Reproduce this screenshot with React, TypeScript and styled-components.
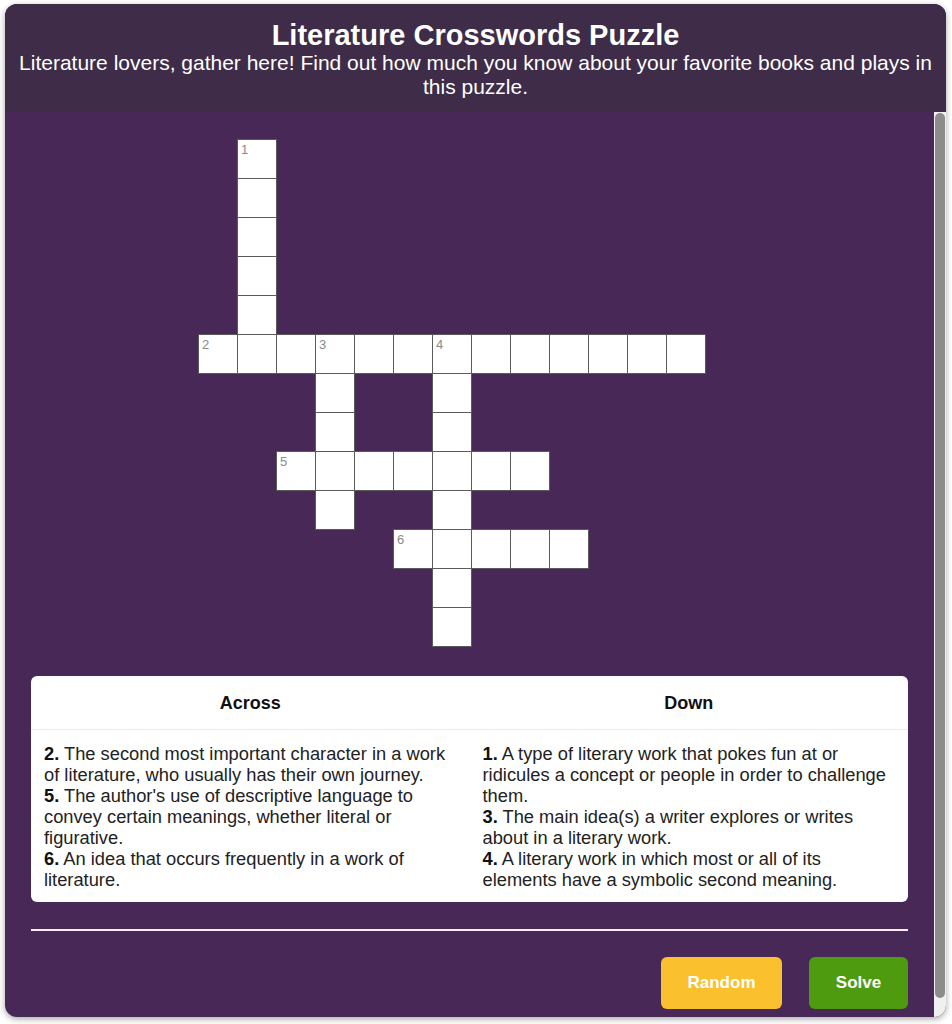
import React from 'react'
import styled, { createGlobalStyle } from 'styled-components'

const GlobalStyle = createGlobalStyle`
  html, body {
    margin: 0;
    padding: 0;
    background: #ffffff;
  }
  * {
    box-sizing: border-box;
  }
`

const CELL = 39

type Entry = { row: number; col: number; num?: number }

// squares that hold a letter, row/col from the top-left of the board
const cells: Entry[] = [
  { row: 0, col: 1, num: 1 },
  { row: 1, col: 1 },
  { row: 2, col: 1 },
  { row: 3, col: 1 },
  { row: 4, col: 1 },
  ...Array.from({ length: 13 }, (_, i) => ({
    row: 5,
    col: i,
    num: i === 0 ? 2 : i === 3 ? 3 : i === 6 ? 4 : undefined,
  })),
  { row: 6, col: 3 },
  { row: 7, col: 3 },
  { row: 9, col: 3 },
  { row: 6, col: 6 },
  { row: 7, col: 6 },
  ...Array.from({ length: 7 }, (_, i) => ({ row: 8, col: 2 + i, num: i === 0 ? 5 : undefined })),
  { row: 9, col: 6 },
  ...Array.from({ length: 5 }, (_, i) => ({ row: 10, col: 5 + i, num: i === 0 ? 6 : undefined })),
  { row: 11, col: 6 },
  { row: 12, col: 6 },
]

const across = [
  { num: 2, text: 'The second most important character in a work of literature, who usually has their own journey.' },
  { num: 5, text: "The author's use of descriptive language to convey certain meanings, whether literal or figurative." },
  { num: 6, text: 'An idea that occurs frequently in a work of literature.' },
]

const down = [
  { num: 1, text: 'A type of literary work that pokes fun at or ridicules a concept or people in order to challenge them.' },
  { num: 3, text: 'The main idea(s) a writer explores or writes about in a literary work.' },
  { num: 4, text: 'A literary work in which most or all of its elements have a symbolic second meaning.' },
]

/* Page + card */
const Page = styled.div`
  padding: 4px 6px 7px 5px;
  font-family: 'Liberation Sans', Arial, sans-serif;
`
const Card = styled.div`
  height: 1013px;
  display: flex;
  flex-direction: column;
  border-radius: 12px;
  overflow: hidden;
  background: #472856;
  box-shadow: 0 2px 6px rgba(0, 0, 0, 0.35);
`
const Header = styled.header`
  flex: 0 0 108px;
  background: #3e2c48;
  color: #ffffff;
  text-align: center;
  padding: 15px 10px 0;
`
const Title = styled.h1`
  margin: 0;
  font-size: 29px;
  line-height: 32px;
  font-weight: 700;
`
const Subtitle = styled.p`
  margin: 0;
  font-size: 21px;
  line-height: 24px;
`
const Main = styled.div`
  flex: 1;
  display: flex;
  min-height: 0;
`
const Body = styled.div`
  flex: 1;
  overflow: hidden;
  padding: 27px 26px 0;
`

/* scroll rail on the right of the card body */
const ScrollTrack = styled.div`
  flex: 0 0 12px;
  display: flex;
  flex-direction: column;
  padding: 1px 1px 19px;
  background: #f0f0f0;
`
const ScrollThumb = styled.div`
  flex: 1;
  background: #8c8c8c;
  border-radius: 6px;
`

/* Board */
const Board = styled.div`
  display: grid;
  grid-template-columns: repeat(13, ${CELL}px);
  grid-template-rows: repeat(13, ${CELL}px);
  margin-left: 167px;
`
const Cell = styled.div<{ $row: number; $col: number }>`
  grid-row: ${(p) => p.$row + 1};
  grid-column: ${(p) => p.$col + 1};
  position: relative;
  background: #ffffff;
  border: 1px solid #5a5a5a;
  margin: 0 -1px -1px 0;
`
const Num = styled.span`
  position: absolute;
  top: 3px;
  left: 3px;
  font-size: 13px;
  line-height: 14px;
  color: #8a8a8a;
`

/* Clues */
const Clues = styled.div`
  margin-top: 30px;
  background: #ffffff;
  border-radius: 6px;
  display: grid;
  grid-template-columns: 1fr 1fr;
`
const ClueHead = styled.div`
  text-align: center;
  font-weight: 700;
  font-size: 18px;
  line-height: 20px;
  padding: 17px 0 16px;
  color: #111111;
  border-bottom: 1px solid #ececec;
`
const ClueList = styled.div`
  padding: 13px 13px 12px;
  font-size: 18.3px;
  line-height: 21px;
  color: #222222;
`
const Clue = styled.div`
  b {
    font-weight: 700;
    color: #111111;
  }
`
const Rule = styled.hr`
  margin: 27px 0 0;
  border: none;
  height: 2px;
  background: #f4f0f6;
`
const Actions = styled.div`
  display: flex;
  justify-content: flex-end;
  gap: 27px;
  margin-top: 26px;
`
const Button = styled.button<{ $color: string; $width: number }>`
  width: ${(p) => p.$width}px;
  height: 52px;
  border: none;
  border-radius: 6px;
  background: ${(p) => p.$color};
  color: #ffffff;
  font-family: 'Liberation Sans', Arial, sans-serif;
  font-weight: 700;
  font-size: 17px;
  cursor: pointer;
`

const App = () => {
  return (
    <Page>
      <GlobalStyle />
      <Card>
        <Header>
          <Title>Literature Crosswords Puzzle</Title>
          <Subtitle>
            Literature lovers, gather here! Find out how much you know about your favorite books and plays in this
            puzzle.
          </Subtitle>
        </Header>
        <Main>
          <Body>
            <Board>
              {cells.map((c) => (
                <Cell key={`${c.row}-${c.col}`} $row={c.row} $col={c.col}>
                  {c.num && <Num>{c.num}</Num>}
                </Cell>
              ))}
            </Board>
            <Clues>
              <ClueHead>Across</ClueHead>
              <ClueHead>Down</ClueHead>
              <ClueList>
                {across.map((c) => (
                  <Clue key={c.num}>
                    <b>{c.num}.</b> {c.text}
                  </Clue>
                ))}
              </ClueList>
              <ClueList>
                {down.map((c) => (
                  <Clue key={c.num}>
                    <b>{c.num}.</b> {c.text}
                  </Clue>
                ))}
              </ClueList>
            </Clues>
            <Rule />
            <Actions>
              <Button $color="#fbc02d" $width={121}>
                Random
              </Button>
              <Button $color="#4e9b10" $width={99}>
                Solve
              </Button>
            </Actions>
          </Body>
          <ScrollTrack>
            <ScrollThumb />
          </ScrollTrack>
        </Main>
      </Card>
    </Page>
  )
}

export default App
